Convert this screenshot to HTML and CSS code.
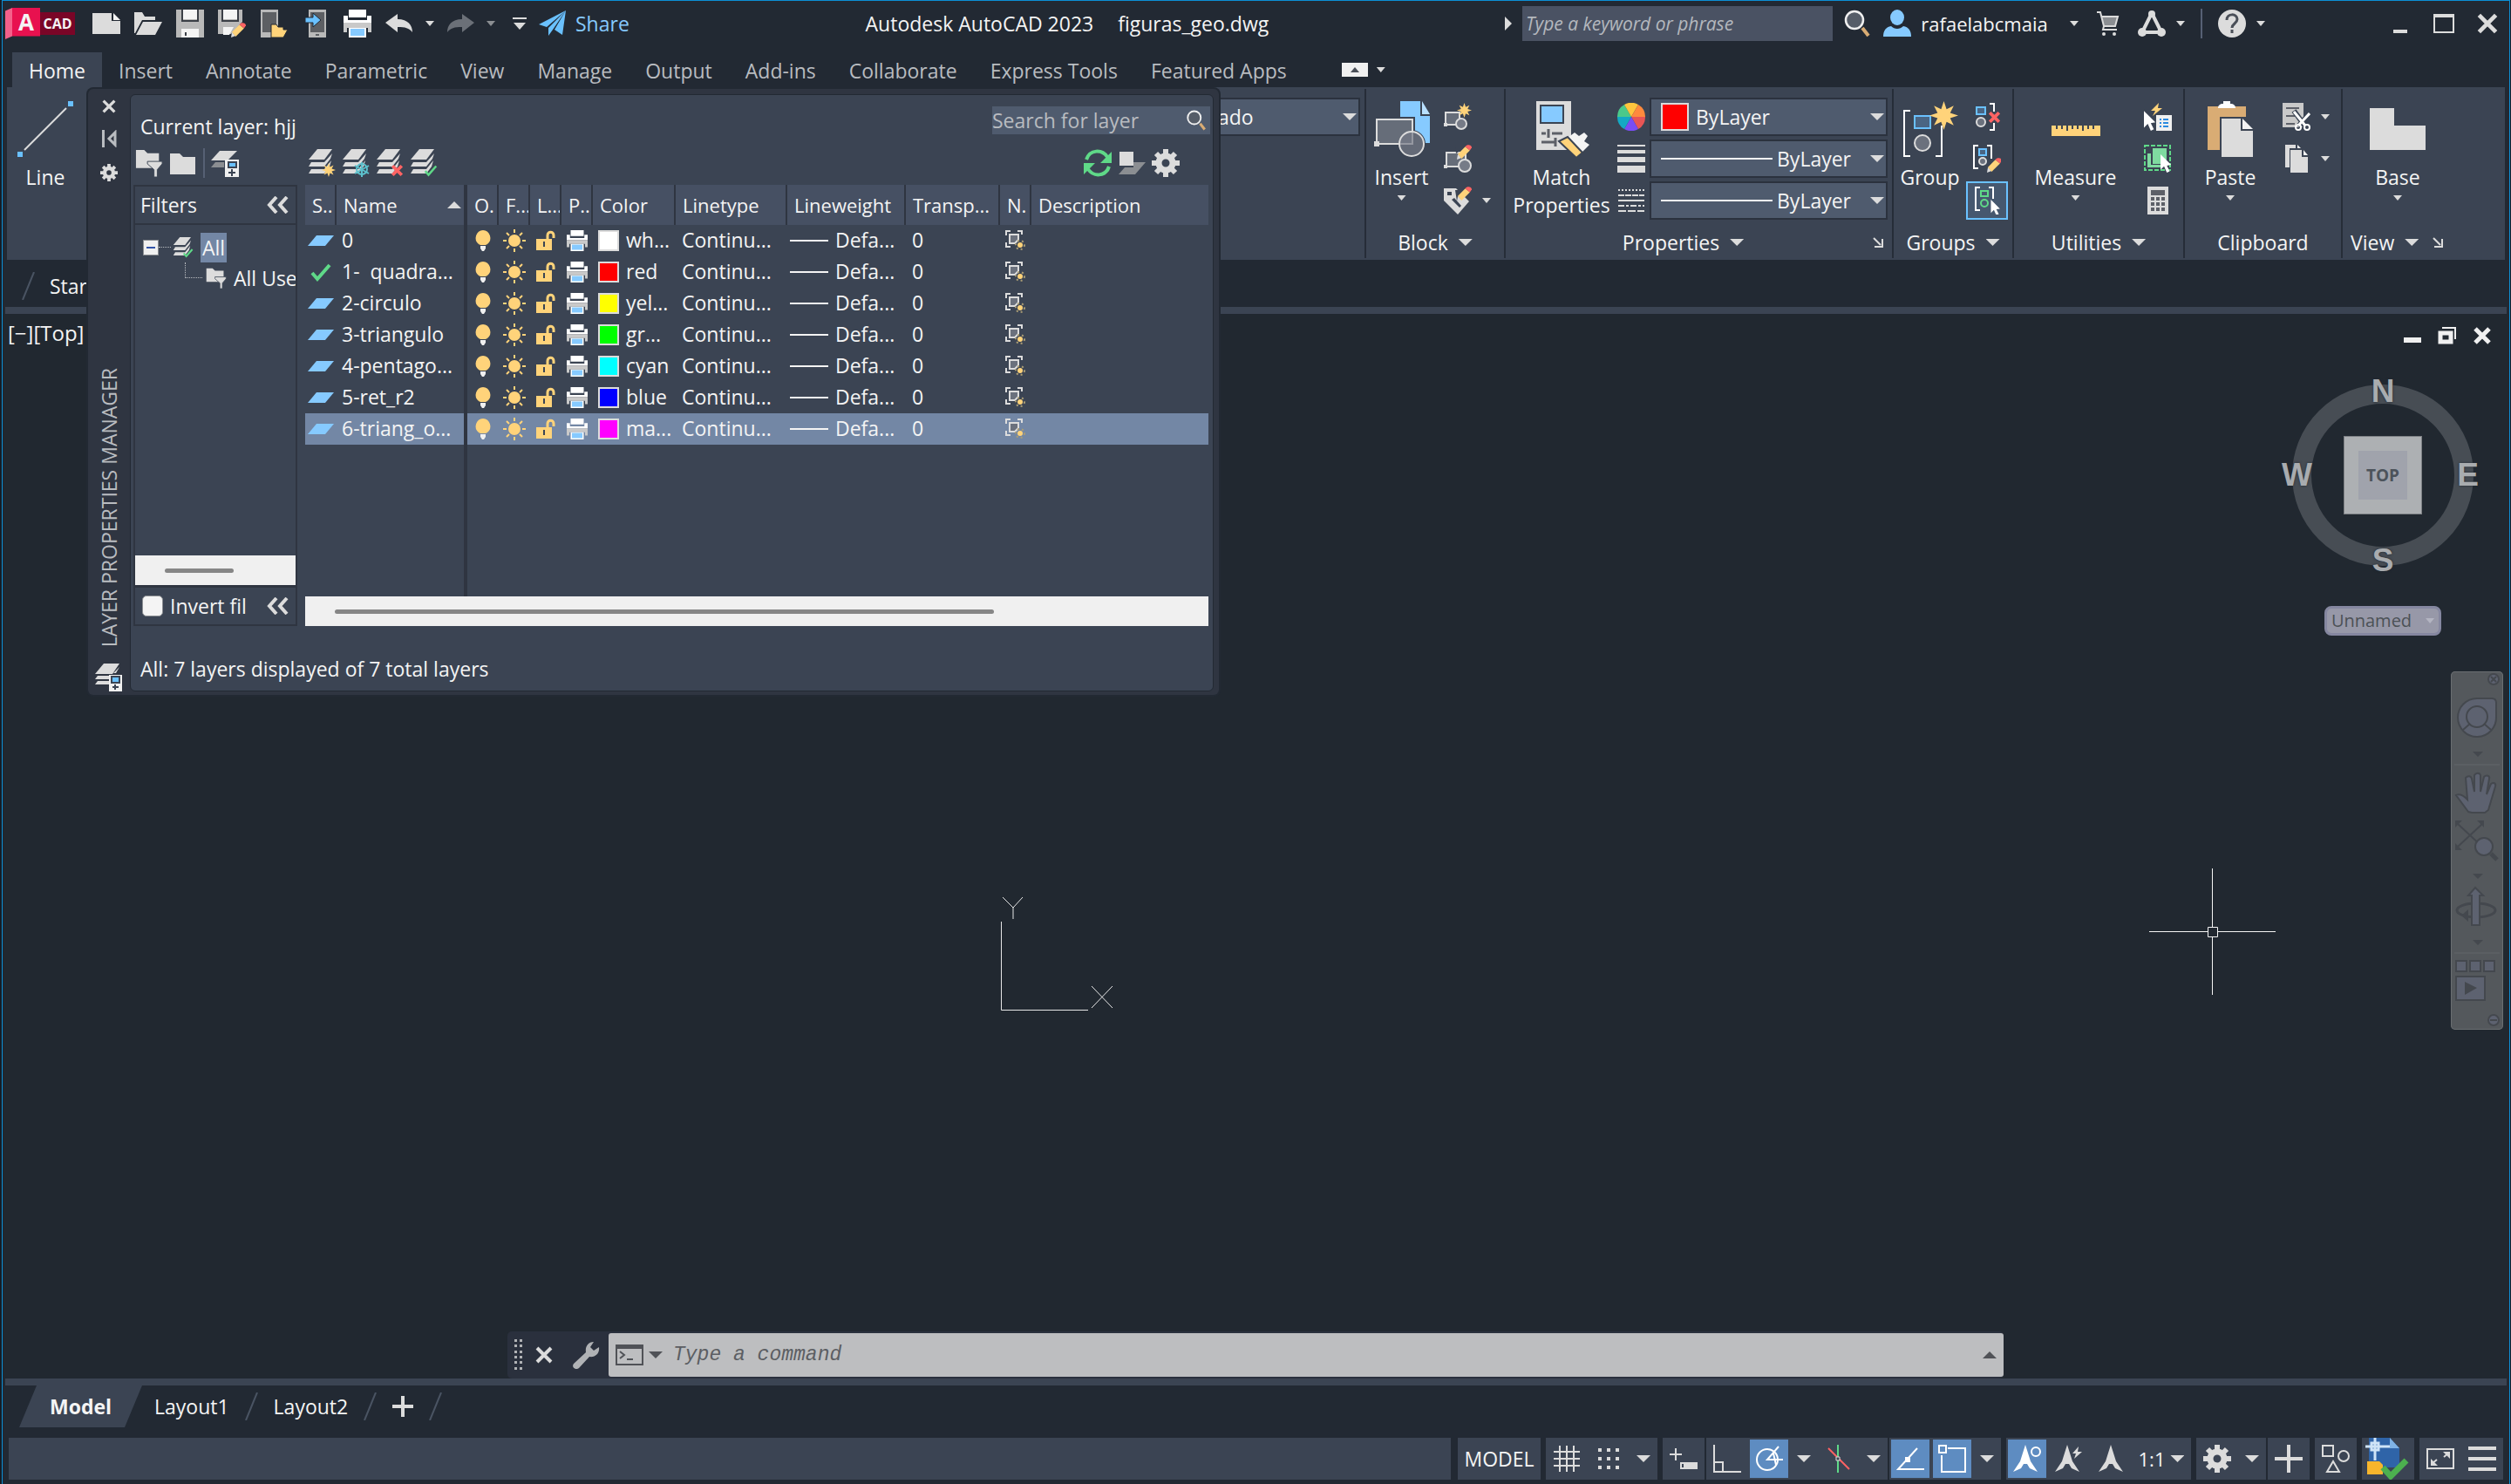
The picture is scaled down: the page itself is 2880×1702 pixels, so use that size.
FILE: index.html
```html
<!DOCTYPE html>
<html lang="en">

<head>
    <meta charset="UTF-8">
    <meta name="viewport" content="width=device-width, initial-scale=1.0">
    <title>Autodesk AutoCAD 2023 - figuras_geo.dwg</title>
    <link rel="stylesheet" href="styles.css">
</head>

<body>

    <!-- shared icons -->
    <svg class="sprite">
        <symbol id="layers" viewBox="0 0 32 32">
            <path fill="#dcdcdc" d="M11 0h17l-9 12H1zM4 15h15l9-10-2 6-7 9H1zM4 23h15l8-10-2 7-6 8H1z" />
        </symbol>
        <symbol id="star" viewBox="0 0 32 32">
            <path fill="#ffd37a" d="M16 0l3 9 8-4-4 8 9 3-9 3 4 8-8-4-3 9-3-9-8 4 4-8-9-3 9-3-4-8 8 4z" />
        </symbol>
        <symbol id="pencil" viewBox="0 0 16 16">
            <path fill="#dcdcdc" d="M0 16l1-6 4 4z" />
            <path fill="#ffd37a" d="M1 10l8-8 5 4-9 9z" />
            <path fill="#ff6363" d="M9 2c2-3 7-2 7 1l-2 3z" />
        </symbol>
        <symbol id="check" viewBox="0 0 24 24">
            <path fill="none" stroke="#5fd988" stroke-width="4" d="M2 13l6 7L22 4" />
        </symbol>
        <symbol id="cross" viewBox="0 0 20 20">
            <path fill="none" stroke="#ff6363" stroke-width="5" d="M3 3l14 14M17 3L3 17" />
        </symbol>
        <symbol id="cursor" viewBox="0 0 16 26">
            <path fill="#fff" d="M0 0l15 15-6 1 4 8-4 2-4-9-5 5z" />
        </symbol>
        <symbol id="folder-filter" viewBox="0 0 32 34">
            <path fill="#dcdcdc" d="M0 1h10l4 4h14v10H14l7 8H0z" />
            <path fill="#dcdcdc" stroke="#3b4453" stroke-width="1" d="M14 15h18v3l-6 7v9h-4v-9l-8-7z" />
        </symbol>
        <symbol id="magnifier" viewBox="0 0 32 32">
            <path stroke="#d9ac74" stroke-width="4" d="M22 21l7 9" />
            <circle cx="13" cy="12" r="10" fill="#565d68" stroke="#f0f0f0" stroke-width="2.500" />
        </symbol>
        <symbol id="gear" viewBox="0 0 32 32">
            <path fill="none" stroke="#dcdcdc" stroke-width="6" d="M16 0v6M16 26v6M0 16h6M26 16h6M5 5l4 4M23 23l4 4M27 5l-4 4M9 23l-4 4" />
            <circle cx="16" cy="16" r="8" fill="none" stroke="#dcdcdc" stroke-width="7" />
        </symbol>
        <symbol id="close" viewBox="0 0 20 20">
            <path fill="none" stroke="#dcdcdc" stroke-width="4" d="M2 2l16 16M18 2L2 18" />
        </symbol>
        <symbol id="launcher" viewBox="0 0 12 12">
            <path fill="none" stroke="#dcdcdc" stroke-width="2" d="M1 1l8 8M11 2v9H2" />
        </symbol>
        <symbol id="slash" viewBox="0 0 15 32">
            <path stroke="#4a5463" stroke-width="2" d="M14 0L1 32" />
        </symbol>
        <symbol id="collapse" viewBox="0 0 25 20">
            <path fill="none" stroke="#dcdcdc" stroke-width="4" d="M11 1L3 10l8 9M23 1l-8 9 8 9" />
        </symbol>
        <symbol id="person" viewBox="0 0 32 32">
            <ellipse cx="16" cy="9" rx="8" ry="9" fill="#86caff" />
            <path fill="#86caff" d="M0 31c0-7 3-11 9-12 4 4 10 4 14 0 6 1 9 5 9 12z" />
        </symbol>
        <!-- layer row icons -->
        <symbol id="plane" viewBox="0 0 30 12">
            <path fill="#86caff" d="M10 0h20L20 12H0z" />
        </symbol>
        <symbol id="bulb" viewBox="0 0 18 24">
            <path fill="#ffd37a" d="M9 0a9 9 0 0 1 5 16l-2 1H6l-2-1A9 9 0 0 1 9 0z" />
            <path fill="#f0f0f0" d="M6 18h6v3l-2 3H8l-2-3z" />
        </symbol>
        <symbol id="sun" viewBox="0 0 26 26">
            <circle cx="13" cy="13" r="7" fill="#ffd37a" />
            <path stroke="#ffd37a" stroke-width="2" d="M13 0v4M13 22v4M0 13h4M22 13h4M4 4l3 3M19 19l3 3M22 4l-3 3M7 19l-3 3" />
        </symbol>
        <symbol id="lock" viewBox="0 0 22 24">
            <path fill="#ffd37a" d="M0 10h18v13H0z" />
            <path fill="none" stroke="#ffd37a" stroke-width="3" d="M13 11V6c0-5 7-5 7 0v3" />
            <path fill="#3b4453" d="M8 13h2v6H8z" />
        </symbol>
        <symbol id="printer" viewBox="0 0 32 32">
            <path fill="#fff" d="M6 0h20v9H6z" />
            <path fill="#fff" d="M0 7h5v5h22V7h5v8H0z" />
            <path fill="#c9c9c9" d="M0 15h32v11h-4v-5H4v5H0z" />
            <path fill="#fff" d="M6 21h20v11H6z" />
            <path fill="#86caff" d="M8 22h16v8H8z" />
        </symbol>
        <symbol id="vp-freeze" viewBox="0 0 24 24">
            <path fill="none" stroke="#dcdcdc" stroke-width="2" d="M1 6V1h5M14 1h5v4M1 14v5h5" />
            <path fill="#6b717d" stroke="#dcdcdc" stroke-width="2" d="M5 5h10v6l-4 4H5z" />
            <circle cx="17" cy="17" r="5" fill="none" stroke="#a89c75" stroke-width="2" stroke-dasharray="2 3" />
            <circle cx="17" cy="17" r="3" fill="#ffd37a" />
        </symbol>
    </svg>

    <div class="window">

        <header class="titlebar">
            <div class="logo">
                <span class="logo-a">A</span>
                <span class="logo-cad">CAD</span>
            </div>
            <nav class="quick-access">
                <button class="qa-btn" aria-label="New">
                    <svg viewBox="0 0 32 32"><path fill="#dcdcdc" d="M0 4h22v9h10v15H0z" /><path fill="#f4f4f4" d="M24 4l8 8h-8z" /></svg>
                </button>
                <button class="qa-btn" aria-label="Open">
                    <svg viewBox="0 0 32 32"><path fill="#dcdcdc" d="M0 3h9l3 5h12v4H9L1 27H0z" /><path fill="#dcdcdc" d="M10 14h22l-8 15H2z" /></svg>
                </button>
                <button class="qa-btn" aria-label="Save">
                    <svg viewBox="0 0 32 32"><path fill="#b9b9b9" d="M0 0h32v32H0z" /><path fill="#f4f4f4" d="M8 0h16v11H8zM6 22h20v10H6z" /><path fill="#3b3f47" d="M6 0h2v12h16V0h2v14H6zM10 26h2v4h-2z" /></svg>
                </button>
                <button class="qa-btn" aria-label="Save As">
                    <svg viewBox="0 0 32 32"><path fill="#b9b9b9" d="M0 0h28v14L15 28H0z" /><path fill="#f4f4f4" d="M6 0h16v11H6zM6 20h12l-5 9H6z" /><path fill="#3b3f47" d="M4 0h2v12h16V0h2v14H4z" /><use href="#pencil" x="15" y="15" width="17" height="17" /></svg>
                </button>
                <button class="qa-btn" aria-label="Open from Web and Mobile">
                    <svg viewBox="0 0 32 32"><path fill="#b9b9b9" d="M1 0h20v32H1z" /><path fill="#5d5f63" d="M3 3h16v23H3z" /><path fill="#ffd37a" stroke="#222933" d="M13 17h6l2 3h6v3h5l-5 9H13z" /></svg>
                </button>
                <button class="qa-btn" aria-label="Save to Web and Mobile">
                    <svg viewBox="0 0 32 32"><path fill="#b9b9b9" d="M8 0h20v32H8z" /><path fill="#5d5f63" d="M10 3h16v23H10zM16 28h4v2h-4z" /><path fill="#6ac1ff" stroke="#222933" d="M4 9h9V4l9 8-9 8v-5H4z" /></svg>
                </button>
                <button class="qa-btn" aria-label="Plot">
                    <svg><use href="#printer" /></svg>
                </button>
                <button class="qa-btn" aria-label="Undo">
                    <svg viewBox="0 0 32 32"><path fill="#dcdcdc" d="M0 15L14 5v6c12 0 17 7 17 15-4-5-8-6-17-6v6z" /></svg>
                </button>
                <button class="drop" aria-label="Undo list"><i class="caret small"></i></button>
                <button class="qa-btn" aria-label="Redo">
                    <svg viewBox="0 0 32 32"><path fill="#6b7078" d="M32 15L18 5v6C6 11 1 18 1 26c4-5 8-6 17-6v6z" /></svg>
                </button>
                <button class="drop" aria-label="Redo list"><i class="caret small dim"></i></button>
                <button class="drop wide" aria-label="Customize Quick Access Toolbar">
                    <svg class="i16" viewBox="0 0 16 16"><path fill="#dcdcdc" d="M0 1h16v2H0zM1 7h14l-7 8z" /></svg>
                </button>
                <button class="share">
                    <svg class="i32" viewBox="0 0 32 32"><path fill="#6ac1ff" d="M31 1L0 17l9 3zM31 1L11 21v9l5-7zM31 1L18 23l9 6z" /></svg>
                    Share
                </button>
            </nav>
            <h1 class="doc-title"><span>Autodesk AutoCAD 2023</span><span>figuras_geo.dwg</span></h1>
            <div class="infocenter">
                <div class="search">
                    <i class="caret-right"></i>
                    <input type="text" class="search-box" placeholder="Type a keyword or phrase" aria-label="Search help">
                    <button aria-label="Search"><svg class="i32"><use href="#magnifier" /></svg></button>
                </div>
                <button class="user">
                    <svg class="i32"><use href="#person" /></svg>
                    <span>rafaelabcmaia</span>
                    <i class="caret small"></i>
                </button>
                <button aria-label="App Store">
                    <svg class="i32" viewBox="0 0 32 32"><path fill="#8b8e92" d="M9 9h18l-3 9H11z" /><path fill="none" stroke="#dcdcdc" stroke-width="2" d="M3 3h4l4 16-1 4h16M8 8h19l-3 11H11" /><circle cx="11" cy="28" r="2" fill="#dcdcdc" /><circle cx="23" cy="28" r="2" fill="#dcdcdc" /></svg>
                </button>
                <button class="pair" aria-label="Autodesk App">
                    <svg class="i32" viewBox="0 0 32 32"><path fill="none" stroke="#dcdcdc" stroke-width="4" d="M15 6L5 26M17 6l10 20M5 26h22" /><circle cx="16" cy="5" r="4" fill="#dcdcdc" /><circle cx="5" cy="26" r="5" fill="#dcdcdc" /><circle cx="27" cy="26" r="5" fill="#dcdcdc" /></svg>
                    <i class="caret small"></i>
                </button>
                <i class="divider"></i>
                <button class="pair" aria-label="Help">
                    <svg class="i32" viewBox="0 0 32 32"><circle cx="16" cy="16" r="16" fill="#dcdcdc" /><path fill="none" stroke="#4a4f58" stroke-width="3" d="M10 12c0-8 12-8 12-1 0 5-6 5-6 10M16 23v4" /></svg>
                    <i class="caret small"></i>
                </button>
            </div>
            <div class="window-buttons">
                <button aria-label="Minimize"><svg viewBox="0 0 24 24"><path fill="#dcdcdc" d="M4 19h16v4H4z" /></svg></button>
                <button aria-label="Maximize"><svg viewBox="0 0 24 24"><path fill="#dcdcdc" d="M0 1h24v22H0zM2 5v16h20V5z" fill-rule="evenodd" /></svg></button>
                <button aria-label="Close"><svg><use href="#close" /></svg></button>
            </div>
        </header>

        <nav class="ribbon-tabs">
            <a class="active" href="#">Home</a>
            <a href="#">Insert</a>
            <a href="#">Annotate</a>
            <a href="#">Parametric</a>
            <a href="#">View</a>
            <a href="#">Manage</a>
            <a href="#">Output</a>
            <a href="#">Add-ins</a>
            <a href="#">Collaborate</a>
            <a href="#">Express Tools</a>
            <a href="#">Featured Apps</a>
            <button class="ribbon-min" aria-label="Minimize ribbon"><svg viewBox="0 0 30 16"><path fill="#f0f0f0" d="M0 0h30v16H0z" /><path fill="#4a4f58" d="M15 5l5 6H10z" /></svg></button>
            <i class="caret small"></i>
        </nav>

        <section class="ribbon">
            <div class="panel draw">
                <div class="panel-body">
                    <button class="big">
                        <svg viewBox="0 0 64 64"><path stroke="#dcdcdc" stroke-width="2" d="M8 56L56 8" /><path fill="#6ac1ff" d="M0 58h6v6H0zM58 0h6v6h-6z" /></svg>
                        Line
                    </button>
                    <button class="big">
                        <svg viewBox="0 0 64 64"><path fill="none" stroke="#dcdcdc" stroke-width="2" d="M8 56V20h30" /></svg>
                        Polyline
                    </button>
                </div>
            </div>
            <div class="panel layers-panel">
                <div class="panel-body">
                    <div class="combo layer-combo">
                        <select aria-label="Layer"><option>ado</option></select>
                        <i class="caret"></i>
                    </div>
                </div>
            </div>
            <div class="panel block">
                <div class="panel-body">
                    <button class="big">
                        <svg viewBox="0 0 64 64"><path fill="#86caff" d="M30 0h23v17h11v31H30z" /><path fill="#b9e0ff" d="M55 0l9 15h-9z" /><path fill="#666d79" stroke="#3b4453" stroke-width="6" d="M3 21h41v28H3z" /><circle cx="43" cy="49" r="16" fill="#3b4453" /><path fill="#666d79" stroke="#dcdcdc" stroke-width="2" d="M3 21h41v28H3z" /><circle cx="43" cy="49" r="14" fill="#767b87" fill-opacity=".7" stroke="#dcdcdc" stroke-width="2" /><path fill="#dcdcdc" d="M0 46h6v6H0z" /></svg>
                        Insert
                        <i class="caret small"></i>
                    </button>
                    <div class="tools">
                        <button class="tool" aria-label="Create Block"><svg viewBox="0 0 32 32"><path fill="#666d79" stroke="#dcdcdc" stroke-width="2" d="M2 11h16v14H2z" /><circle cx="20" cy="24" r="6" fill="#767b87" stroke="#dcdcdc" stroke-width="2" /><path fill="#dcdcdc" d="M0 23h4v4H0z" /><use href="#star" x="15" y="0" width="17" height="17" /></svg></button>
                        <button class="tool" aria-label="Edit Block"><svg viewBox="0 0 32 32"><path fill="#666d79" stroke="#dcdcdc" stroke-width="2" d="M3 9h22v16H3z" /><circle cx="24" cy="24" r="7" fill="#767b87" stroke="#dcdcdc" stroke-width="2" /><path fill="#dcdcdc" d="M0 23h4v4H0z" /><path fill="#3b4453" d="M13 0h12l-2 4-9 6z" /><use href="#pencil" x="15" y="0" width="17" height="17" /></svg></button>
                        <div class="tool-row">
                            <button class="tool" aria-label="Edit Attributes"><svg viewBox="0 0 32 32"><path fill="#dcdcdc" d="M0 2h14l15 15-13 15L0 16z" /><path fill="#3b4453" d="M4 6h5v4H4zM9 15l3-2 8 9-2 2zM13 4h9v9l-7 4z" /><use href="#pencil" x="15" y="0" width="17" height="17" /></svg></button>
                            <i class="caret small"></i>
                        </div>
                    </div>
                </div>
                <h2 class="panel-title">Block <i class="caret"></i></h2>
            </div>
            <div class="panel properties">
                <div class="panel-body">
                    <button class="big">
                        <svg viewBox="0 0 64 64"><path fill="#dcdcdc" d="M3 0h40v56H3z" /><path fill="#86caff" stroke="#3b4453" stroke-width="2" d="M8 5h26v20H8z" /><path stroke="#5d6068" stroke-width="3" d="M9 37h5M21 37h12M17 32v10M9 47h15M25 42v10" /><path fill="#f4f4f4" d="M39 42l8-6 5 4 6-4 4 4-4 6 6 4-9 9z" /><path fill="#ffd37a" stroke="#3b4453" stroke-width="2" d="M29 46l10-5 17 18-7 6z" /></svg>
                        Match<br>Properties
                    </button>
                    <div class="prop-rows">
                        <div class="prop-row">
                            <svg class="i32" viewBox="0 0 32 32"><path fill="#4bc98a" d="M16 16L0 16A16 16 0 0 1 8 2z" /><path fill="#ffc53d" d="M16 16L8 2a16 16 0 0 1 16 0z" /><path fill="#ff8a3d" d="M16 16l8-14a16 16 0 0 1 8 14z" /><path fill="#e85555" d="M16 16h16a16 16 0 0 1-8 14z" /><path fill="#7a4df5" d="M16 16l8 14a16 16 0 0 1-16 0z" /><path fill="#14a9c4" d="M16 16L8 30A16 16 0 0 1 0 16z" /></svg>
                            <div class="combo">
                                <i class="swatch large red"></i>
                                <select aria-label="Object Color"><option>ByLayer</option></select>
                                <i class="caret"></i>
                            </div>
                        </div>
                        <div class="prop-row">
                            <svg class="i32" viewBox="0 0 32 32"><path fill="#dcdcdc" d="M0 0h32v2H0zM0 6h32v4H0zM0 14h32v6H0zM0 24h32v8H0z" /></svg>
                            <div class="combo">
                                <i class="line-sample long"></i>
                                <select aria-label="Lineweight"><option>ByLayer</option></select>
                                <i class="caret"></i>
                            </div>
                        </div>
                        <div class="prop-row">
                            <svg class="i32" viewBox="0 0 32 32"><path fill="none" stroke="#dcdcdc" stroke-width="2" stroke-dasharray="2 2" d="M1 4h30" /><path fill="none" stroke="#dcdcdc" stroke-width="2" stroke-dasharray="7 1" d="M1 10h30" /><path stroke="#dcdcdc" stroke-width="2" d="M1 16h30" /><path fill="none" stroke="#dcdcdc" stroke-width="2" stroke-dasharray="7 2 3 2" d="M1 22h30" /><path fill="none" stroke="#dcdcdc" stroke-width="2" stroke-dasharray="9 2" d="M1 28h30" /></svg>
                            <div class="combo">
                                <i class="line-sample long"></i>
                                <select aria-label="Linetype"><option>ByLayer</option></select>
                                <i class="caret"></i>
                            </div>
                        </div>
                    </div>
                </div>
                <h2 class="panel-title with-launcher"><span></span><b>Properties <i class="caret"></i></b><svg class="i12"><use href="#launcher" /></svg></h2>
            </div>
            <div class="panel groups">
                <div class="panel-body">
                    <button class="big">
                        <svg viewBox="0 0 64 64"><path fill="none" stroke="#fff" stroke-width="2" d="M9 11H2v52h7M38 63h7V28" /><path fill="#4a6583" stroke="#6ac1ff" stroke-width="2" d="M14 17h18v14H14z" /><circle cx="23" cy="48" r="9" fill="#6b717d" stroke="#dcdcdc" stroke-width="2" /><use href="#star" x="31" y="0" width="33" height="33" /></svg>
                        Group
                    </button>
                    <div class="tools">
                        <button class="tool" aria-label="Ungroup"><svg viewBox="0 0 32 32"><path fill="none" stroke="#fff" stroke-width="2" d="M19 1h5v9M24 23v8h-5" /><path fill="#4a6583" stroke="#6ac1ff" stroke-width="2" d="M4 5h10v8H4z" /><circle cx="9" cy="22" r="5" fill="#6b717d" stroke="#dcdcdc" stroke-width="2" /><use href="#cross" x="17" y="9" width="15" height="15" /></svg></button>
                        <button class="tool" aria-label="Group Edit"><svg viewBox="0 0 32 32"><path fill="none" stroke="#fff" stroke-width="2" d="M6 1H1v26h5M16 1h5v15" /><path fill="#4a6583" stroke="#6ac1ff" stroke-width="2" d="M7 5h8v7H7z" /><circle cx="11" cy="19" r="4" fill="#6b717d" stroke="#dcdcdc" stroke-width="2" /><use href="#pencil" x="16" y="15" width="17" height="17" /></svg></button>
                        <button class="tool pressed" aria-label="Group Selection"><svg viewBox="0 0 32 32"><path fill="none" stroke="#fff" stroke-width="2" d="M8 1H3v26h5M18 1h5v13" /><path fill="none" stroke="#5fd988" stroke-width="2" d="M9 5h8v6H9z" /><circle cx="13" cy="19" r="4" fill="none" stroke="#5fd988" stroke-width="2" /><use href="#cursor" x="20" y="15" width="12" height="18" /></svg></button>
                    </div>
                </div>
                <h2 class="panel-title">Groups <i class="caret"></i></h2>
            </div>
            <div class="panel utilities">
                <div class="panel-body">
                    <button class="big">
                        <svg viewBox="0 0 64 64"><path fill="#ffd37a" d="M4 28h56v12H4z" /><path stroke="#3b4453" stroke-width="2" d="M10 28v4M16 28v4M22 28v6M28 28v4M34 28v4M40 28v6M46 28v4M52 28v4" /></svg>
                        Measure
                        <i class="caret small"></i>
                    </button>
                    <div class="tools">
                        <button class="tool" aria-label="Quick Select"><svg viewBox="0 0 32 32"><path fill="#f0f0f0" d="M14 14h18v18H14z" /><path stroke="#2b8ae0" stroke-width="2" d="M18 19h2M22 19h6M18 23h2M22 23h6M18 27h2M22 27h6" /><use href="#cursor" x="0" y="9" width="14" height="23" /><path fill="#ffd37a" d="M17 0l-9 9h5l-3 6 11-9h-5z" /></svg></button>
                        <button class="tool" aria-label="Select All"><svg viewBox="0 0 32 32"><path fill="none" stroke="#5fd988" stroke-width="2" stroke-dasharray="5 2" d="M1 1h29v28H1z" /><path fill="#7fdba0" d="M10 4h16v18H10zM4 10h4v13h13v3H4z" /><use href="#cursor" x="19" y="11" width="13" height="21" /></svg></button>
                        <button class="tool" aria-label="Quick Calculator"><svg viewBox="0 0 32 32"><path fill="#dcdcdc" d="M4 0h24v32H4z" /><path fill="#5d6068" d="M8 4h16v6H8zM8 12h4v4H8zM14 12h4v4h-4zM20 12h4v4h-4zM8 18h4v4H8zM14 18h4v4h-4zM20 18h4v4h-4zM8 24h4v4H8zM14 24h4v4h-4zM20 24h4v4h-4z" /></svg></button>
                    </div>
                </div>
                <h2 class="panel-title">Utilities <i class="caret"></i></h2>
            </div>
            <div class="panel clipboard">
                <div class="panel-body">
                    <button class="big">
                        <svg viewBox="0 0 64 64"><path fill="#d9ac74" d="M6 6h44v12H20v38H6z" /><path fill="#fff" d="M24 0h8v3c4 0 6 2 6 5H18c0-3 2-5 6-5z" /><path fill="#dcdcdc" d="M22 20h22v14h14v30H22z" /><path fill="#f4f4f4" d="M46 20l12 12H46z" /></svg>
                        Paste
                        <i class="caret small"></i>
                    </button>
                    <div class="tools">
                        <div class="tool-row">
                            <button class="tool" aria-label="Cut"><svg viewBox="0 0 32 32"><path fill="#c9c9c9" d="M0 0h24v28H0z" /><path stroke="#5d6068" stroke-width="2" d="M4 6h15M4 15h10M4 24h10" /><path stroke="#3b4453" stroke-width="6" d="M13 9l13 18M31 12L18 27" /><path stroke="#fff" stroke-width="3" d="M13 10l13 16M31 12L18 26" /><circle cx="18" cy="28" r="3" fill="none" stroke="#fff" stroke-width="2" /><circle cx="28" cy="28" r="3" fill="none" stroke="#fff" stroke-width="2" /></svg></button>
                            <i class="caret small"></i>
                        </div>
                        <div class="tool-row">
                            <button class="tool" aria-label="Copy Clip"><svg viewBox="0 0 32 32"><path fill="#dcdcdc" d="M3 0h12v4H8v22H3zM9 6h13v8h7v18H9z" /><path fill="#f4f4f4" d="M17 0l4 4h-4zM24 6l5 6h-5z" /></svg></button>
                            <i class="caret small"></i>
                        </div>
                    </div>
                </div>
                <h2 class="panel-title">Clipboard</h2>
            </div>
            <div class="panel view">
                <div class="panel-body">
                    <button class="big">
                        <svg viewBox="0 0 64 64"><path fill="#dcdcdc" d="M0 8h28v20h36v28H0z" /></svg>
                        Base
                        <i class="caret small"></i>
                    </button>
                </div>
                <h2 class="panel-title left">View <i class="caret"></i><svg class="i12"><use href="#launcher" /></svg></h2>
            </div>
        </section>

        <nav class="file-tabs">
            <svg class="slash"><use href="#slash" /></svg>
            <a href="#">Start</a>
        </nav>
        <div class="bar"></div>

        <main class="canvas">
            <div class="viewport-label">[−][Top]</div>
            <div class="doc-buttons">
                <svg viewBox="0 0 22 20"><path fill="#f0f0f0" d="M1 12h20v6H1z" /></svg>
                <svg viewBox="0 0 22 20"><path fill="none" stroke="#f0f0f0" stroke-width="2" d="M5 1h15v13" /><path fill="none" stroke="#f0f0f0" stroke-width="5" d="M3 7h12v10H3z" /></svg>
                <svg viewBox="0 0 22 20"><path stroke="#f0f0f0" stroke-width="5" d="M3 2l16 16M19 2L3 18" /></svg>
            </div>

            <div class="viewcube">
                <span class="compass n">N</span>
                <span class="compass w">W</span>
                <span class="cube"><span class="face">TOP</span></span>
                <span class="compass e">E</span>
                <span class="compass s">S</span>
            </div>
            <button class="ucs-menu">Unnamed <i class="caret small"></i></button>

            <div class="navbar">
                <svg viewBox="0 0 60 411">
                    <g fill="#5d6270" stroke="#44484e" stroke-width="2">
                        <circle cx="49" cy="9" r="6" />
                        <path d="M46 6l6 6M52 6l-6 6" />
                        <path d="M30 31h17c3 0 5 2 5 5v16a22 22 0 1 1-22-21z" />
                        <circle cx="30" cy="52" r="12" />
                        <path d="M14 67l8-7M46 67l-8-7" />
                        <path d="M20 161l-14-19c4-2 8 0 13 5l-2-25c3-3 6-2 7 1l3 15v-19c2-3 6-3 7 0v19l4-17c3-3 7-1 6 2l-3 18 5-12c3-2 6-1 5 3l-8 27-4 3H24z" />
                        <path d="M8 175l28 26M36 175L8 201" />
                        <circle cx="38" cy="201" r="10" />
                        <path stroke-width="5" d="M46 209l7 7" />
                        <ellipse cx="29" cy="274" rx="22" ry="8" fill="none" stroke-width="3" />
                        <path d="M24 291v-34h-4l8-9 9 9h-4v34z" />
                        <path d="M6 332h12v12H6zM22 332h12v12H22zM38 332h12v12H38zM6 350h33v27H6z" />
                        <circle cx="49" cy="400" r="6" />
                        <path d="M45 400h8" />
                    </g>
                    <path fill="#44484e" d="M25 92h12l-6 6zM25 232h12l-6 6zM25 308h12l-6 6zM16 356l14 7-14 8zM12 280l8-7v14zM5 171h8l-8 8zM38 171v8l-8-8zM5 205v-8l8 8z" />
                    <path stroke="#62666b" d="M4 107h52M4 323h52" />
                </svg>
            </div>

            <svg class="ucs-icon" viewBox="0 0 132 132">
                <path fill="none" stroke="#e6e6e6" stroke-width="1" d="M3.500 29v101.500H103M5 1l12 12L28 1M17 13v13M107 103l24 25M131 103l-24 25" />
            </svg>
            <svg class="crosshair" viewBox="0 0 145 145">
                <path fill="none" stroke="#f4f4f4" stroke-width="1" d="M0 72.500h67M78 72.500h67M72.500 0v67M72.500 78v67M67.500 67.500h11v11h-11z" />
            </svg>

            <div class="command-line">
                <svg class="grip" viewBox="0 0 10 36"><path fill="#b0b2b5" d="M0 0h3v3H0zM6 0h3v3H6zM0 6h3v3H0zM6 6h3v3H6zM0 13h3v3H0zM6 13h3v3H6zM0 19h3v3H0zM6 19h3v3H6zM0 25h3v3H0zM6 25h3v3H6zM0 32h3v3H0zM6 32h3v3H6z" /></svg>
                <button aria-label="Close"><svg class="i20"><use href="#close" /></svg></button>
                <button class="customize" aria-label="Customize"><svg class="i32" viewBox="0 0 32 32"><path fill="#b0b2b5" d="M2 26L16 13c-1-6 2-12 9-12l-4 6 4 4 6-4c1 7-4 12-11 11L8 31c-4 3-9-1-6-5z" /></svg></button>
                <label class="command-field">
                    <svg class="i32" viewBox="0 0 32 32"><path fill="none" stroke="#505257" stroke-width="2" d="M1 5h30v22H1z" /><path fill="#505257" d="M1 5h30v4H1zM13 20h7v2h-7z" /><path fill="none" stroke="#505257" stroke-width="2" d="M5 12l5 4-5 4" /></svg>
                    <i class="caret dark"></i>
                    <input type="text" placeholder="Type a command" aria-label="Command">
                    <i class="caret dark up"></i>
                </label>
            </div>
        </main>

        <div class="bar"></div>
        <nav class="layout-tabs">
            <a class="active" href="#">Model</a>
            <a href="#">Layout1</a>
            <svg class="slash"><use href="#slash" /></svg>
            <a href="#">Layout2</a>
            <svg class="slash"><use href="#slash" /></svg>
            <button aria-label="New layout"><svg class="i24" viewBox="0 0 24 24"><path fill="#dcdcdc" d="M10 0h4v10h10v4H14v10h-4V14H0v-4h10z" /></svg></button>
            <svg class="slash"><use href="#slash" /></svg>
        </nav>

        <footer class="status-bar">
            <div class="group blank"></div>
            <div class="group"><button class="model-btn">MODEL</button></div>
            <div class="group">
                <button class="st" aria-label="Grid"><svg viewBox="0 0 32 32"><path stroke="#dcdcdc" stroke-width="2" d="M8 1v30M16 1v30M24 1v30M1 8h30M1 16h30M1 24h30" /></svg></button>
                <button class="st" aria-label="Snap"><svg viewBox="0 0 32 32"><path fill="#dcdcdc" d="M4 4h4v4H4zM14 4h4v4h-4zM24 4h4v4h-4zM4 14h4v4H4zM14 14h4v4h-4zM24 14h4v4h-4zM4 24h4v4H4zM14 24h4v4h-4zM24 24h4v4h-4z" /></svg></button>
                <button class="st-drop" aria-label="Snap settings"><i class="caret"></i></button>
            </div>
            <div class="cluster">
                <div class="group">
                    <button class="st" aria-label="Dynamic Input"><svg viewBox="0 0 32 32"><path stroke="#dcdcdc" stroke-width="2" d="M0 11h14M7 4v14" /><path fill="#dcdcdc" d="M12 20h20v8H12z" /><path fill="#3b4453" d="M14 22h2v4h-2z" /></svg></button>
                </div>
                <div class="group">
                    <button class="st" aria-label="Ortho"><svg viewBox="0 0 32 32"><path fill="none" stroke="#dcdcdc" stroke-width="2" d="M1 0v31h31M1 20h10v11" /></svg></button>
                    <button class="st on" aria-label="Polar Tracking"><svg viewBox="0 0 32 32"><circle cx="14" cy="17" r="12" fill="none" stroke="#fff" stroke-width="2" /><path fill="none" stroke="#fff" stroke-width="2" d="M27 2L14 17h18M21 10l3 13" /></svg></button>
                    <button class="st-drop" aria-label="Polar settings"><i class="caret"></i></button>
                    <button class="st" aria-label="Isodraft"><svg viewBox="0 0 32 32"><path stroke="#5fd988" stroke-width="2" d="M15 0v32" /><path stroke="#ff6363" stroke-width="2" d="M4 4l24 24" /><path fill="#3b4453" stroke="#dcdcdc" d="M13 14h4v4h-4z" /></svg></button>
                    <button class="st-drop" aria-label="Isodraft settings"><i class="caret"></i></button>
                </div>
                <div class="group">
                    <button class="st on" aria-label="Object Snap Tracking"><svg viewBox="0 0 32 32"><path fill="none" stroke="#fff" stroke-width="2" d="M24 4L2 28h30" /><path fill="#fff" d="M10 14h6v6h-6z" /></svg></button>
                    <button class="st on" aria-label="Object Snap"><svg viewBox="0 0 32 32"><path fill="none" stroke="#fff" stroke-width="2" d="M11 4h20v27H4V12M1 1h8v8H1z" /></svg></button>
                    <button class="st-drop" aria-label="Object Snap settings"><i class="caret"></i></button>
                </div>
            </div>
            <div class="group">
                <button class="st on" aria-label="Annotation visibility"><svg viewBox="0 0 32 32"><path fill="#fff" d="M14 0l6 19 8 12-9-4-3-5h-4l-3 5-9 4 8-12z" /><circle cx="26" cy="8" r="5" fill="none" stroke="#fff" stroke-width="2" /></svg></button>
                <button class="st" aria-label="Auto scale"><svg viewBox="0 0 32 32"><path fill="#dcdcdc" d="M14 0l6 19 8 12-9-4-3-5h-4l-3 5-9 4 8-12zM27 2l-7 8h4l-2 6 9-8h-5z" /></svg></button>
                <button class="st" aria-label="Annotation scale"><svg viewBox="0 0 32 32"><path fill="#dcdcdc" d="M16 0l6 19 8 12-9-4-3-5h-4l-3 5-9 4 8-12z" /></svg></button>
                <button class="scale-btn">1:1 <i class="caret"></i></button>
            </div>
            <div class="cluster">
                <div class="group">
                    <button class="st" aria-label="Workspace"><svg><use href="#gear" /></svg></button>
                    <button class="st-drop" aria-label="Workspace list"><i class="caret"></i></button>
                </div>
                <div class="group">
                    <button class="st" aria-label="Annotation monitor"><svg viewBox="0 0 32 32"><path fill="#dcdcdc" d="M14 0h4v14h14v4H18v14h-4V18H0v-4h14z" /></svg></button>
                </div>
            </div>
            <div class="group">
                <button class="st" aria-label="Isolate objects"><svg viewBox="0 0 32 32"><path fill="none" stroke="#dcdcdc" stroke-width="2" d="M1 1h12v12H1zM13 19l7 12H6z" /><circle cx="25" cy="13" r="6" fill="none" stroke="#dcdcdc" stroke-width="2" /></svg></button>
            </div>
            <div class="group">
                <button class="dwg" aria-label="Hardware acceleration"><svg viewBox="0 0 52 48"><path fill="#2f64a8" d="M4 0h24l11 12v22H4z" /><path fill="#7fb2e5" d="M28 0l11 12H28z" /><path fill="none" stroke="#cfe4f7" stroke-width="3" d="M0 10h28M11 0v26M7 6h8v8H7z" /><path fill="#f7b52c" d="M2 27h14l4 4v11H2z" /><path fill="none" stroke="#4cb04f" stroke-width="7" d="M20 34l9 10 18-18" /></svg></button>
            </div>
            <div class="group">
                <button class="st" aria-label="Clean screen"><svg viewBox="0 0 32 32"><path fill="none" stroke="#dcdcdc" stroke-width="2" d="M1 5h30v22H1zM6 22l6-5M20 14l6-5" /><path fill="#dcdcdc" d="M5 16v8h8zM27 8v8l-8-8z" /></svg></button>
                <button class="st" aria-label="Customization"><svg viewBox="0 0 32 32"><path fill="#dcdcdc" d="M0 2h32v4H0zM0 14h32v4H0zM0 26h32v4H0z" /></svg></button>
            </div>
        </footer>

        <!-- floating Layer Properties Manager -->
        <section class="palette">
            <aside class="rail">
                <button aria-label="Close palette"><svg class="i16"><use href="#close" /></svg></button>
                <button aria-label="Auto-hide"><svg class="i20" viewBox="0 0 20 20"><path fill="#b9bcc0" d="M2 0h3v20H2z" /><path fill="none" stroke="#b9bcc0" stroke-width="3" d="M17 3v14l-7-7z" /></svg></button>
                <button aria-label="Palette settings"><svg class="i20"><use href="#gear" /></svg></button>
                <h2 class="rail-title">LAYER PROPERTIES MANAGER</h2>
                <svg class="i32" viewBox="0 0 32 32"><path fill="#dcdcdc" d="M10 0h18l-8 12H0zM3 14h13v4H0zM3 20h13v4H0zM28 4l-4 7h-3z" /><path fill="#f0f0f0" d="M16 13h15v19H16z" /><path fill="#6ac1ff" stroke="#3b4453" stroke-width="2" d="M19 15h9v7h-9z" /><path stroke="#3b4453" stroke-width="2" d="M20 27h7M23 24v6" /></svg>
            </aside>
            <div class="palette-body">
                <div class="palette-top">
                    <p class="current-layer">Current layer: hjj</p>
                    <div class="layer-search">
                        <input type="text" placeholder="Search for layer" aria-label="Search for layer">
                        <svg class="i24"><use href="#magnifier" /></svg>
                    </div>
                </div>
                <div class="palette-tools">
                    <button aria-label="New Property Filter"><svg class="i32"><use href="#folder-filter" /></svg></button>
                    <button aria-label="New Group Filter"><svg class="i32" viewBox="0 0 32 32"><path fill="#dcdcdc" d="M1 5h11l4 4h14v20H1z" /></svg></button>
                    <i class="divider"></i>
                    <button aria-label="Layer States Manager"><svg class="i32" viewBox="0 0 32 32"><path fill="#dcdcdc" d="M10 2h20L19 13H0z" /><path fill="#8b8e92" d="M5 15h10v6H0z" /><path fill="#f0f0f0" d="M16 12h16v20H16z" /><path fill="#6ac1ff" stroke="#3b4453" stroke-width="2" d="M20 15h9v6h-9z" /><path stroke="#3b4453" stroke-width="2" d="M20 27h8M24 23v8" /></svg></button>
                    <div class="layer-tools">
                        <button aria-label="New Layer"><svg class="i32"><use href="#layers" /><use href="#star" x="16" y="16" width="16" height="16" /></svg></button>
                        <button aria-label="New Layer VP Frozen"><svg class="i32" viewBox="0 0 32 32"><use href="#layers" width="32" height="32" /><path fill="none" stroke="#5cc0cc" stroke-width="2" d="M23 15v17M15 19l16 9M31 19l-16 9" /><circle cx="23" cy="23" r="6" fill="none" stroke="#5cc0cc" stroke-width="2" /></svg></button>
                        <button aria-label="Delete Layer"><svg class="i32"><use href="#layers" /><use href="#cross" x="17" y="17" width="15" height="15" /></svg></button>
                        <button aria-label="Set Current"><svg class="i32"><use href="#layers" /><use href="#check" x="16" y="17" width="16" height="15" /></svg></button>
                    </div>
                    <div class="right-tools">
                        <button aria-label="Refresh"><svg class="i32" viewBox="0 0 32 32"><path fill="none" stroke="#5fd988" stroke-width="4" d="M3 12C7 0 21 0 27 9M29 20C25 32 11 32 5 23" /><path fill="#5fd988" d="M32 3v13H19zM0 29V16h13z" /></svg></button>
                        <button aria-label="Toggle Override Highlight"><svg class="i32" viewBox="0 0 32 32"><path fill="#8b8e92" d="M8 21h10v-6h14L20 29H1z" /><path fill="#dcdcdc" d="M2 3h16v16H2z" /></svg></button>
                        <button aria-label="Settings"><svg class="i32"><use href="#gear" /></svg></button>
                    </div>
                </div>
                <div class="palette-main">
                    <div class="filters">
                        <div class="filters-head">Filters <svg class="chevrons"><use href="#collapse" /></svg></div>
                        <div class="tree">
                            <div class="node">
                                <span class="expander"></span>
                                <i class="dots"></i>
                                <svg class="i24" viewBox="0 0 32 32"><use href="#layers" width="32" height="32" /><use href="#check" x="15" y="16" width="17" height="16" /></svg>
                                <span class="node-label selected">All</span>
                            </div>
                            <div class="node child">
                                <i class="elbow"></i>
                                <svg class="i24"><use href="#folder-filter" /></svg>
                                <span class="node-label">All Use</span>
                            </div>
                        </div>
                        <div class="scrollbar"><i class="thumb short"></i></div>
                        <div class="invert">
                            <input type="checkbox" id="invert"><label for="invert">Invert fil</label>
                            <svg class="chevrons"><use href="#collapse" /></svg>
                        </div>
                    </div>
                    <div class="layer-list">
                        <table>
                            <colgroup>
                                <col class="c-icon"><col class="c-name"><col class="c-icon"><col class="c-icon"><col class="c-icon"><col class="c-icon">
                                <col class="c-color"><col class="c-linetype"><col class="c-weight"><col class="c-transp"><col class="c-icon"><col>
                            </colgroup>
                            <thead>
                                <tr>
                                    <th>S..</th>
                                    <th class="name"><span>Name <i class="caret up"></i></span></th>
                                    <th>O.</th>
                                    <th>F...</th>
                                    <th>L...</th>
                                    <th>P..</th>
                                    <th>Color</th>
                                    <th>Linetype</th>
                                    <th>Lineweight</th>
                                    <th>Transp...</th>
                                    <th>N.</th>
                                    <th>Description</th>
                                </tr>
                            </thead>
                            <tbody>
                                <tr>
                                    <td class="icon"><svg class="plane"><use href="#plane" /></svg></td>
                                    <td class="name">0</td>
                                    <td class="icon"><svg class="i24"><use href="#bulb" /></svg></td>
                                    <td class="icon"><svg class="i26"><use href="#sun" /></svg></td>
                                    <td class="icon"><svg class="i24"><use href="#lock" /></svg></td>
                                    <td class="icon"><svg class="i24"><use href="#printer" /></svg></td>
                                    <td><i class="swatch white"></i>wh...</td>
                                    <td>Continu...</td>
                                    <td class="weight"><i class="line-sample"></i>Defa...</td>
                                    <td>0</td>
                                    <td class="icon"><svg class="i24"><use href="#vp-freeze" /></svg></td>
                                    <td></td>
                                </tr>
                                <tr>
                                    <td class="icon"><svg class="i24"><use href="#check" /></svg></td>
                                    <td class="name">1-&nbsp; quadra...</td>
                                    <td class="icon"><svg class="i24"><use href="#bulb" /></svg></td>
                                    <td class="icon"><svg class="i26"><use href="#sun" /></svg></td>
                                    <td class="icon"><svg class="i24"><use href="#lock" /></svg></td>
                                    <td class="icon"><svg class="i24"><use href="#printer" /></svg></td>
                                    <td><i class="swatch red"></i>red</td>
                                    <td>Continu...</td>
                                    <td class="weight"><i class="line-sample"></i>Defa...</td>
                                    <td>0</td>
                                    <td class="icon"><svg class="i24"><use href="#vp-freeze" /></svg></td>
                                    <td></td>
                                </tr>
                                <tr>
                                    <td class="icon"><svg class="plane"><use href="#plane" /></svg></td>
                                    <td class="name">2-circulo</td>
                                    <td class="icon"><svg class="i24"><use href="#bulb" /></svg></td>
                                    <td class="icon"><svg class="i26"><use href="#sun" /></svg></td>
                                    <td class="icon"><svg class="i24"><use href="#lock" /></svg></td>
                                    <td class="icon"><svg class="i24"><use href="#printer" /></svg></td>
                                    <td><i class="swatch yellow"></i>yel...</td>
                                    <td>Continu...</td>
                                    <td class="weight"><i class="line-sample"></i>Defa...</td>
                                    <td>0</td>
                                    <td class="icon"><svg class="i24"><use href="#vp-freeze" /></svg></td>
                                    <td></td>
                                </tr>
                                <tr>
                                    <td class="icon"><svg class="plane"><use href="#plane" /></svg></td>
                                    <td class="name">3-triangulo</td>
                                    <td class="icon"><svg class="i24"><use href="#bulb" /></svg></td>
                                    <td class="icon"><svg class="i26"><use href="#sun" /></svg></td>
                                    <td class="icon"><svg class="i24"><use href="#lock" /></svg></td>
                                    <td class="icon"><svg class="i24"><use href="#printer" /></svg></td>
                                    <td><i class="swatch green"></i>gr...</td>
                                    <td>Continu...</td>
                                    <td class="weight"><i class="line-sample"></i>Defa...</td>
                                    <td>0</td>
                                    <td class="icon"><svg class="i24"><use href="#vp-freeze" /></svg></td>
                                    <td></td>
                                </tr>
                                <tr>
                                    <td class="icon"><svg class="plane"><use href="#plane" /></svg></td>
                                    <td class="name">4-pentago...</td>
                                    <td class="icon"><svg class="i24"><use href="#bulb" /></svg></td>
                                    <td class="icon"><svg class="i26"><use href="#sun" /></svg></td>
                                    <td class="icon"><svg class="i24"><use href="#lock" /></svg></td>
                                    <td class="icon"><svg class="i24"><use href="#printer" /></svg></td>
                                    <td><i class="swatch cyan"></i>cyan</td>
                                    <td>Continu...</td>
                                    <td class="weight"><i class="line-sample"></i>Defa...</td>
                                    <td>0</td>
                                    <td class="icon"><svg class="i24"><use href="#vp-freeze" /></svg></td>
                                    <td></td>
                                </tr>
                                <tr>
                                    <td class="icon"><svg class="plane"><use href="#plane" /></svg></td>
                                    <td class="name">5-ret_r2</td>
                                    <td class="icon"><svg class="i24"><use href="#bulb" /></svg></td>
                                    <td class="icon"><svg class="i26"><use href="#sun" /></svg></td>
                                    <td class="icon"><svg class="i24"><use href="#lock" /></svg></td>
                                    <td class="icon"><svg class="i24"><use href="#printer" /></svg></td>
                                    <td><i class="swatch blue"></i>blue</td>
                                    <td>Continu...</td>
                                    <td class="weight"><i class="line-sample"></i>Defa...</td>
                                    <td>0</td>
                                    <td class="icon"><svg class="i24"><use href="#vp-freeze" /></svg></td>
                                    <td></td>
                                </tr>
                                <tr class="selected">
                                    <td class="icon"><svg class="plane"><use href="#plane" /></svg></td>
                                    <td class="name">6-triang_o...</td>
                                    <td class="icon"><svg class="i24"><use href="#bulb" /></svg></td>
                                    <td class="icon"><svg class="i26"><use href="#sun" /></svg></td>
                                    <td class="icon"><svg class="i24"><use href="#lock" /></svg></td>
                                    <td class="icon"><svg class="i24"><use href="#printer" /></svg></td>
                                    <td><i class="swatch magenta"></i>ma...</td>
                                    <td>Continu...</td>
                                    <td class="weight"><i class="line-sample"></i>Defa...</td>
                                    <td>0</td>
                                    <td class="icon"><svg class="i24"><use href="#vp-freeze" /></svg></td>
                                    <td></td>
                                </tr>
                            </tbody>
                        </table>
                        <div class="scrollbar"><i class="thumb"></i></div>
                    </div>
                </div>
                <p class="palette-status">All: 7 layers displayed of 7 total layers</p>
            </div>
        </section>

    </div>

</body>

</html>
```

FILE: styles.css
```css
* {
    box-sizing: border-box;
}

body {
    margin: 0;
    background-color: #161c24;
    color: #f4f4f4;
    font-family: "Open Sans", "Noto Sans", sans-serif;
    font-size: 23px;
    line-height: 32px;
}

h1, h2, p {
    margin: 0;
    font-size: 23px;
    font-weight: normal;
}

a {
    color: inherit;
    text-decoration: none;
}

button {
    display: flex;
    align-items: center;
    justify-content: center;
    padding: 0;
    border: none;
    background: none;
    color: inherit;
    font: inherit;
}

input, select {
    min-width: 0;
    padding: 0;
    border: none;
    outline: none;
    background: none;
    color: inherit;
    font: inherit;
    appearance: none;
}

svg {
    display: block;
    flex: none;
}

.sprite {
    display: none;
}

.i12 { width: 12px; height: 12px; }
.i16 { width: 16px; height: 16px; }
.i20 { width: 20px; height: 20px; }
.i24 { width: 24px; height: 24px; }
.i26 { width: 26px; height: 26px; }
.i32 { width: 32px; height: 32px; }

.caret {
    flex: none;
    width: 16px;
    height: 8px;
    background-color: #dcdcdc;
    clip-path: polygon(0 0, 100% 0, 50% 100%);
}

.caret.small {
    width: 10px;
    height: 6px;
}

.caret.up {
    clip-path: polygon(0 100%, 100% 100%, 50% 0);
}

.caret.dim { background-color: #8b8e92; }
.caret.dark { background-color: #505257; }

.caret-right {
    width: 8px;
    height: 16px;
    background-color: #dcdcdc;
    clip-path: polygon(0 0, 100% 50%, 0 100%);
}

.divider {
    width: 2px;
    height: 34px;
    background-color: #566074;
}

.swatch {
    flex: none;
    width: 24px;
    height: 24px;
    border: 2px solid #dcdcdc;
}

.swatch.large {
    width: 32px;
    height: 32px;
}

.white { background-color: #fff; }
.red { background-color: #f00; }
.yellow { background-color: #ff0; }
.green { background-color: #0f0; }
.cyan { background-color: #0ff; }
.blue { background-color: #00f; }
.magenta { background-color: #f0f; }

.line-sample {
    flex: none;
    width: 44px;
    height: 2px;
    background-color: #f4f4f4;
}

.line-sample.long {
    width: 128px;
}

/* main window */
.window {
    display: flex;
    flex-direction: column;
    height: 100vh;
    margin: 0 1px 0 2px;
    padding-bottom: 5px;
    border: 1px solid #0c8fd6;
    border-bottom: none;
    background-color: #222933;
    overflow: hidden;
}

.bar {
    flex: none;
    height: 8px;
    margin: 0 3px;
    background-color: #3b4453;
}

/* title bar */
.titlebar {
    display: flex;
    flex: none;
    align-items: center;
    height: 52px;
}

.logo {
    display: flex;
    align-items: center;
    margin: 0 12px 0 3px;
    font-weight: bold;
}

.logo-a {
    width: 40px;
    height: 36px;
    padding-left: 8px;
    background: linear-gradient(to right, #f4608a 8px, #e8114f 8px);
    clip-path: polygon(0 10%, 20% 0, 100% 0, 100% 90%, 20% 90%, 0 100%);
    text-align: center;
    font-size: 26px;
}

.logo-cad {
    width: 40px;
    height: 26px;
    background-color: #7a0527;
    text-align: center;
    font-size: 16px;
    line-height: 26px;
}

.quick-access {
    display: flex;
    align-items: center;
}

.qa-btn {
    width: 48px;
    height: 48px;
}

.qa-btn svg {
    width: 32px;
    height: 32px;
}

.drop {
    width: 22px;
    height: 48px;
}

.drop.wide {
    width: 44px;
}

.share {
    gap: 10px;
    color: #86caff;
}

.doc-title {
    display: flex;
    flex: 1;
    justify-content: center;
    gap: 28px;
}

.infocenter {
    display: flex;
    align-items: center;
    gap: 18px;
}

.search {
    display: flex;
    align-items: center;
    gap: 12px;
}

.search button {
    margin-right: -4px;
}

.search-box {
    width: 356px;
    height: 40px;
    padding-left: 4px;
    background-color: #4a5263;
    font-style: italic;
    font-size: 21px;
}

.search-box::placeholder {
    color: #b4b8be;
    opacity: 1;
}

.user {
    justify-content: space-between;
    width: 224px;
    font-size: 22px;
}

.user span {
    margin-right: 14px;
}

.pair {
    gap: 12px;
}

.window-buttons {
    display: flex;
    margin-left: 130px;
}

.window-buttons button {
    width: 50px;
    height: 48px;
}

.window-buttons svg {
    width: 24px;
    height: 24px;
}

/* ribbon tabs */
.ribbon-tabs {
    display: flex;
    flex: none;
    align-items: center;
    height: 47px;
    padding: 7px 0 0 11px;
    color: #b9bcc0;
}

.ribbon-tabs a {
    padding: 5px 19px 3px;
}

.ribbon-tabs .active {
    background-color: #3b4453;
    color: #f4f4f4;
}

.ribbon-min {
    margin: 0 10px 0 44px;
}

.ribbon-min svg {
    width: 30px;
    height: 16px;
}

/* ribbon */
.ribbon {
    display: flex;
    flex: none;
    height: 198px;
    margin: 0 5px;
    background-color: #3b4453;
}

.panel {
    display: flex;
    flex-direction: column;
    flex: none;
    margin: 2px 0;
    border-left: 2px solid #262d38;
}

.panel.draw {
    width: 240px;
    border-left: none;
}

.layers-panel {
    flex: 1;
    align-items: flex-end;
}

.block { width: 160px; }
.properties { width: 445px; }
.groups { width: 138px; }
.utilities { width: 196px; }
.clipboard { width: 181px; }
.view { width: 188px; }

.panel-body {
    display: flex;
    flex: 1;
    padding-top: 10px;
}

.panel-title {
    display: flex;
    align-items: center;
    justify-content: center;
    gap: 12px;
    height: 36px;
}

.panel-title.left {
    justify-content: flex-start;
    padding-left: 9px;
}

.panel-title.left svg {
    margin-left: 4px;
}

.with-launcher {
    justify-content: space-between;
    padding-right: 10px;
}

.with-launcher b {
    display: flex;
    align-items: center;
    gap: 12px;
    margin-right: 14px;
    font-weight: normal;
}

.big {
    flex: 1;
    flex-direction: column;
    justify-content: flex-start;
    padding-top: 4px;
}

.big svg {
    width: 64px;
    height: 64px;
    margin-bottom: 7px;
}

.big .caret {
    margin-top: 5px;
}

.draw .big {
    flex: none;
    width: 88px;
}

.view .big {
    flex: none;
    width: 126px;
}

.tools {
    display: flex;
    flex-direction: column;
    gap: 4px;
    margin-right: 5px;
}

.block .tools { margin-right: 29px; }
.clipboard .tools { margin-right: 27px; }

.tool {
    flex: none;
    width: 48px;
    height: 44px;
}

.tool svg {
    width: 32px;
    height: 32px;
}

.tool.pressed {
    border: 2px solid #6ac1ff;
    background-color: #46586f;
}

.tool-row {
    display: flex;
    align-items: center;
    gap: 4px;
    width: 48px;
}

.prop-rows {
    display: flex;
    flex-direction: column;
    gap: 4px;
    width: 310px;
    margin-right: 5px;
}

.prop-row {
    display: flex;
    align-items: center;
    gap: 5px;
}

.combo {
    display: flex;
    flex: 1;
    align-items: center;
    gap: 8px;
    height: 44px;
    padding: 0 2px 0 11px;
    border: 2px solid #2b323e;
    background-color: #4f5b6e;
}

.combo select {
    flex: 1;
}

.line-sample.long + select {
    margin-left: -3px;
}

.layer-combo {
    flex: none;
    width: 167px;
    margin-right: 5px;
    padding-left: 2px;
}

/* file tabs */
.file-tabs {
    display: flex;
    flex: none;
    align-items: center;
    gap: 17px;
    height: 54px;
    padding: 6px 0 0 22px;
}

.slash {
    width: 15px;
    height: 32px;
}

/* drawing area */
.canvas {
    position: relative;
    flex: 1;
    background-color: #212830;
}

.viewport-label {
    padding: 6px 0 0 6px;
    font-size: 24px;
}

.doc-buttons {
    position: absolute;
    top: 15px;
    right: 20px;
    display: flex;
    gap: 18px;
}

.doc-buttons svg {
    width: 22px;
    height: 20px;
}

.viewcube {
    position: absolute;
    top: 81px;
    right: 41px;
    display: flex;
    align-items: center;
    justify-content: center;
    width: 208px;
    height: 208px;
    border: 22px solid #474d54;
    border-radius: 50%;
}

.compass {
    position: absolute;
    color: #a9acaf;
    font-family: "Liberation Sans", sans-serif;
    font-size: 37px;
    font-weight: bold;
    line-height: 36px;
    text-shadow: 0 0 3px #212830;
}

.compass.n { top: -32px; }
.compass.s { bottom: -34px; }
.compass.w { left: -34px; }
.compass.e { right: -28px; }

.cube {
    display: flex;
    align-items: center;
    justify-content: center;
    width: 90px;
    height: 90px;
    border: 1px solid #7d8084;
    background-color: #adb0b3;
}

.face {
    width: 56px;
    height: 56px;
    background-color: #a0a3ac;
    color: #4c535b;
    text-align: center;
    font-size: 19px;
    font-weight: bold;
    line-height: 56px;
}

.ucs-menu {
    position: absolute;
    top: 335px;
    right: 78px;
    gap: 16px;
    width: 134px;
    height: 34px;
    border: 3px solid #8587a0;
    border-radius: 8px;
    background-color: #9798a8;
    color: #4c5156;
    font-size: 20px;
}

.ucs-menu .caret {
    background-color: #b4b5c2;
}

.navbar {
    position: absolute;
    top: 410px;
    right: 7px;
    border-radius: 5px;
    background-color: #54585c;
    box-shadow: inset 0 0 0 1px #6a6e71;
}

.navbar svg {
    width: 60px;
    height: 411px;
}

.ucs-icon {
    position: absolute;
    top: 668px;
    left: 1142px;
    width: 132px;
    height: 132px;
}

.crosshair {
    position: absolute;
    top: 636px;
    right: 268px;
    width: 145px;
    height: 145px;
}

.command-line {
    position: absolute;
    right: 580px;
    bottom: 0;
    left: 579px;
    display: flex;
    align-items: center;
    gap: 14px;
    height: 54px;
    padding: 2px 0 2px 8px;
    border-radius: 5px;
    background-color: #2a303d;
}

.customize {
    margin-left: 8px;
}

.grip {
    width: 10px;
    height: 36px;
}

.command-field {
    display: flex;
    flex: 1;
    align-items: center;
    gap: 6px;
    height: 50px;
    margin-left: -4px;
    padding: 0 8px;
    border-radius: 3px;
    background-color: #bdbec0;
}

.command-field input {
    flex: 1;
    margin-left: 6px;
    font-family: "Liberation Mono", monospace;
    font-size: 23px;
    font-style: italic;
}

.command-field input::placeholder {
    color: #5c5e63;
    opacity: 1;
}

/* layout tabs */
.layout-tabs {
    display: flex;
    flex: none;
    align-items: center;
    gap: 18px;
    height: 60px;
    padding: 0 0 12px 19px;
}

.layout-tabs .active {
    width: 141px;
    margin-right: -4px;
    background-color: #3b4453;
    clip-path: polygon(20px 0, 100% 0, calc(100% - 20px) 100%, 0 100%);
    text-align: center;
    font-weight: bold;
    line-height: 48px;
}

/* status bar */
.status-bar {
    display: flex;
    flex: none;
    gap: 6px;
    height: 48px;
    padding: 0 7px;
}

.group {
    display: flex;
    align-items: center;
    background-color: #3b4453;
}

.group.blank {
    flex: 1;
    margin-right: 2px;
}

.cluster {
    display: flex;
    gap: 2px;
}

.model-btn {
    width: 95px;
}

.st {
    width: 44px;
    height: 44px;
    margin: 2px;
}

.st svg {
    width: 32px;
    height: 32px;
}

.st.on {
    background-color: #5e8cc1;
}

.st-drop {
    width: 32px;
    height: 44px;
}

.scale-btn {
    gap: 6px;
    width: 68px;
    font-size: 22px;
}

.dwg {
    width: 60px;
}

.dwg svg {
    width: 52px;
    height: 48px;
}

/* layer properties manager */
.palette {
    position: absolute;
    top: 102px;
    left: 101px;
    display: flex;
    width: 1297px;
    height: 695px;
    padding: 6px 6px 4px 0;
    border-radius: 6px;
    background-color: #2f3541;
    box-shadow: 0 0 0 2px #222933;
}

.rail {
    display: flex;
    flex-direction: column;
    align-items: center;
    gap: 19px;
    width: 48px;
    padding-top: 6px;
}

.rail-title {
    margin-top: auto;
    color: #b9bcc0;
    writing-mode: vertical-rl;
    transform: rotate(180deg);
}

.palette-body {
    display: flex;
    flex: 1;
    flex-direction: column;
    border: 1px solid #222933;
    border-radius: 6px;
    background-color: #3b4453;
}

.palette-top {
    display: flex;
    align-items: flex-start;
    justify-content: space-between;
    height: 61px;
    padding: 13px 3px 0 11px;
}

.current-layer {
    line-height: 46px;
}

.layer-search {
    display: flex;
    align-items: center;
    width: 250px;
    height: 32px;
    padding-right: 4px;
    background-color: #4f5b6e;
}

.layer-search input {
    flex: 1;
}

.layer-search input::placeholder {
    color: #b9bcc0;
    opacity: 1;
}

.palette-tools {
    display: flex;
    align-items: center;
    gap: 7px;
    height: 34px;
    margin-bottom: 8px;
    padding: 0 38px 0 5px;
}

.layer-tools, .right-tools {
    display: flex;
    gap: 7px;
}

.layer-tools {
    margin-left: 72px;
}

.right-tools {
    margin-left: auto;
}

.palette-main {
    display: flex;
    flex: 1;
    gap: 9px;
    padding: 0 5px 0 3px;
}

.filters {
    display: flex;
    flex-direction: column;
    width: 188px;
    border: 2px solid #2f3541;
    overflow: hidden;
}

.filters-head {
    display: flex;
    align-items: center;
    justify-content: space-between;
    height: 44px;
    padding: 0 8px 0 6px;
    border-bottom: 2px solid #2f3541;
}

.chevrons {
    width: 25px;
    height: 20px;
}

.tree {
    flex: 1;
    padding-top: 8px;
}

.node {
    display: flex;
    align-items: center;
    height: 35px;
    padding-left: 9px;
}

.node.child {
    padding-left: 57px;
}

.node-label {
    margin-left: 8px;
    white-space: nowrap;
}

.node-label.selected {
    padding: 1px 2px;
    background-color: #7387a5;
}

.expander {
    flex: none;
    width: 18px;
    height: 18px;
    border: 1px solid #8b8e92;
    background: linear-gradient(#3354a8, #3354a8) center / 10px 2px no-repeat #f0f0f0;
}

.dots {
    flex: none;
    width: 14px;
    margin-right: 2px;
    border-top: 1px dotted #b9bcc0;
}

.elbow {
    flex: none;
    width: 20px;
    height: 18px;
    margin: 0 4px 18px 0;
    border-bottom: 1px dotted #b9bcc0;
    border-left: 1px dotted #b9bcc0;
}

.scrollbar {
    display: flex;
    flex: none;
    align-items: center;
    height: 34px;
    padding-left: 34px;
    background-color: #f0f0f0;
}

.thumb {
    width: 756px;
    height: 5px;
    border-radius: 3px;
    background-color: #868686;
}

.thumb.short {
    width: 79px;
}

.invert {
    display: flex;
    align-items: center;
    height: 45px;
    padding: 0 8px;
    border-top: 3px solid #2f3541;
}

.invert input {
    width: 24px;
    height: 24px;
    margin: 0 8px 0 0;
    border: 1px solid #8b8e92;
    border-radius: 5px;
    background-color: #f4f4f4;
}

.invert svg {
    margin-left: auto;
}

.layer-list {
    display: flex;
    flex: 1;
    flex-direction: column;
    justify-content: space-between;
    background: linear-gradient(to right, transparent 182px, #2f3541 182px, #2f3541 186px, transparent 186px);
}

table {
    width: 100%;
    border-spacing: 0;
    table-layout: fixed;
}

.c-icon { width: 36px; }
.c-name { width: 150px; }
.c-color { width: 95px; }
.c-linetype { width: 128px; }
.c-weight { width: 136px; }
.c-transp { width: 108px; }

th {
    height: 46px;
    padding: 0 0 0 8px;
    border-right: 2px solid #2f3541;
    background-color: #465063;
    overflow: hidden;
    text-align: left;
    font-size: 22px;
    font-weight: normal;
    white-space: nowrap;
}

th:last-child {
    border-right: none;
}

th.name {
    padding-right: 3px;
    border-right-width: 4px;
}

th.name span {
    display: flex;
    align-items: center;
    justify-content: space-between;
}

td {
    height: 36px;
    padding: 0 0 2px 7px;
    white-space: nowrap;
}

td.name {
    padding-left: 6px;
    border-right: 4px solid #2f3541;
}

td.icon {
    padding: 0;
}

td.icon svg {
    margin: 0 auto;
}

td .swatch {
    display: inline-block;
    margin: 0 8px 0 -1px;
    vertical-align: -4px;
}

td.weight {
    padding-left: 3px;
}

td .line-sample {
    display: inline-block;
    margin-right: 8px;
    vertical-align: 7px;
}

.plane {
    width: 30px;
    height: 12px;
}

.selected td {
    background-color: #7387a5;
}

.palette-status {
    height: 74px;
    padding: 25px 0 0 11px;
    line-height: 48px;
}
```
